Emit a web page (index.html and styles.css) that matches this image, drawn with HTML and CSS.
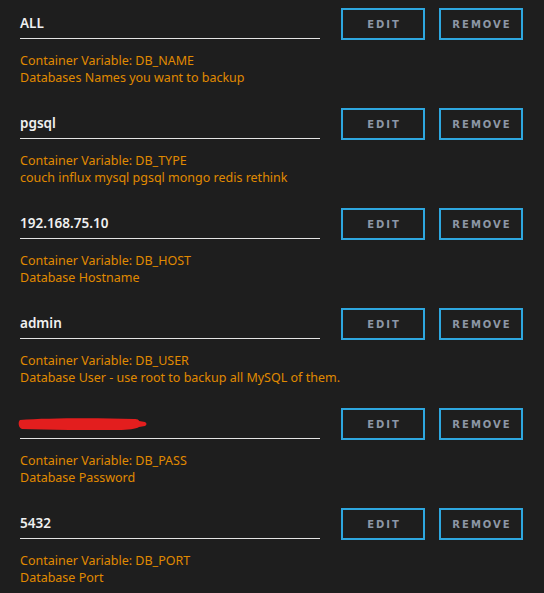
FILE: index.html
```html
<!DOCTYPE html>
<html>
<head>
<meta charset="utf-8">
<link rel="stylesheet" href="styles.css">
</head>
<body>
<div class="list">
  <div class="row">
    <div class="top">
      <div class="field">ALL</div>
      <div class="btns"><span class="btn">EDIT</span><span class="btn">REMOVE</span></div>
    </div>
    <div class="desc">Container Variable: DB_NAME<br>Databases Names you want to backup</div>
  </div>
  <div class="row">
    <div class="top">
      <div class="field">pgsql</div>
      <div class="btns"><span class="btn">EDIT</span><span class="btn">REMOVE</span></div>
    </div>
    <div class="desc">Container Variable: DB_TYPE<br>couch influx mysql pgsql mongo redis rethink</div>
  </div>
  <div class="row">
    <div class="top">
      <div class="field">192.168.75.10</div>
      <div class="btns"><span class="btn">EDIT</span><span class="btn">REMOVE</span></div>
    </div>
    <div class="desc">Container Variable: DB_HOST<br>Database Hostname</div>
  </div>
  <div class="row">
    <div class="top">
      <div class="field">admin</div>
      <div class="btns"><span class="btn">EDIT</span><span class="btn">REMOVE</span></div>
    </div>
    <div class="desc">Container Variable: DB_USER<br>Database User - use root to backup all MySQL of them.</div>
  </div>
  <div class="row">
    <div class="top">
      <div class="field"><svg class="redact" width="130" height="14" viewBox="0 0 130 14"><path d="M2 3 C30 1 80 1 116 2 C120 2 121 3 121 4 L127 5 C129 6 129 8 127 9 L121 10 C118 12 110 13 100 13 C70 13 30 13 4 12 C0 11 0 4 2 3 Z" fill="#e31e1e"/></svg></div>
      <div class="btns"><span class="btn">EDIT</span><span class="btn">REMOVE</span></div>
    </div>
    <div class="desc">Container Variable: DB_PASS<br>Database Password</div>
  </div>
  <div class="row">
    <div class="top">
      <div class="field">5432</div>
      <div class="btns"><span class="btn">EDIT</span><span class="btn">REMOVE</span></div>
    </div>
    <div class="desc">Container Variable: DB_PORT<br>Database Port</div>
  </div>
</div>
</body>
</html>
```
FILE: styles.css
```css
html, body {
  margin: 0;
  padding: 0;
  background: #1e1e1e;
}
body {
  font-family: "Noto Sans", "Open Sans", sans-serif;
  padding-top: 8px;
}
.row {
  height: 100px;
  box-sizing: border-box;
}
.top {
  display: flex;
  align-items: flex-start;
  padding-left: 20px;
}
.field {
  width: 300px;
  height: 30px;
  border-bottom: 1px solid #e4e4e4;
  color: #f0f0f0;
  font-weight: 600;
  font-size: 13.5px;
  line-height: 30px;
  position: relative;
}
.redact {
  position: absolute;
  left: -2px;
  top: 9px;
}
.btns {
  display: flex;
  gap: 14px;
  margin-left: 21px;
}
.btn {
  box-sizing: border-box;
  width: 84px;
  height: 32px;
  border: 2px solid #2ea7df;
  color: #8d97a6;
  font-family: "DejaVu Sans", sans-serif;
  font-weight: bold;
  font-size: 10px;
  letter-spacing: 2px;
  display: flex;
  align-items: center;
  justify-content: center;
  padding-left: 2px;
}
.desc {
  margin-top: 12px;
  padding-left: 20px;
  color: #e08a00;
  font-size: 12.5px;
  line-height: 17px;
}
```
